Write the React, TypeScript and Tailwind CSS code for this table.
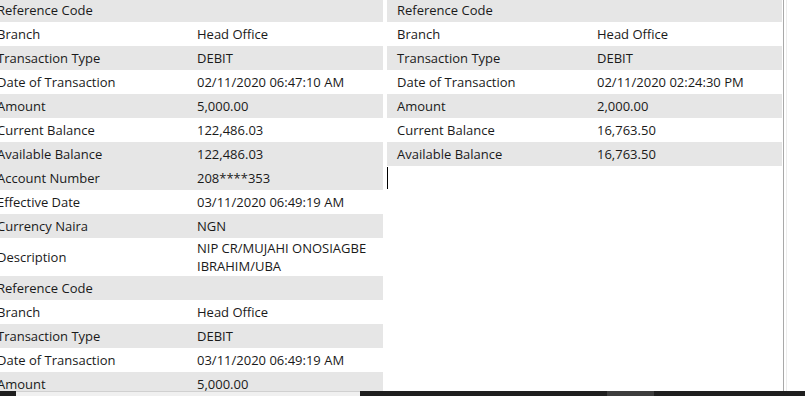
import React from "react";

type Row = { label: string; value: React.ReactNode; gray: boolean; tall?: boolean };

const leftRows: Row[] = [
  { label: "Reference Code", value: "", gray: true },
  { label: "Branch", value: "Head Office", gray: false },
  { label: "Transaction Type", value: "DEBIT", gray: true },
  { label: "Date of Transaction", value: "02/11/2020 06:47:10 AM", gray: false },
  { label: "Amount", value: "5,000.00", gray: true },
  { label: "Current Balance", value: "122,486.03", gray: false },
  { label: "Available Balance", value: "122,486.03", gray: true },
  { label: "Account Number", value: "208****353", gray: true },
  { label: "Effective Date", value: "03/11/2020 06:49:19 AM", gray: false },
  { label: "Currency Naira", value: "NGN", gray: true },
  {
    label: "Description",
    value: (
      <>
        NIP CR/MUJAHI ONOSIAGBE
        <br />
        IBRAHIM/UBA
      </>
    ),
    gray: false,
    tall: true,
  },
  { label: "Reference Code", value: "", gray: true },
  { label: "Branch", value: "Head Office", gray: false },
  { label: "Transaction Type", value: "DEBIT", gray: true },
  { label: "Date of Transaction", value: "03/11/2020 06:49:19 AM", gray: false },
  { label: "Amount", value: "5,000.00", gray: true },
];

const rightRows: Row[] = [
  { label: "Reference Code", value: "", gray: true },
  { label: "Branch", value: "Head Office", gray: false },
  { label: "Transaction Type", value: "DEBIT", gray: true },
  { label: "Date of Transaction", value: "02/11/2020 02:24:30 PM", gray: false },
  { label: "Amount", value: "2,000.00", gray: true },
  { label: "Current Balance", value: "16,763.50", gray: false },
  { label: "Available Balance", value: "16,763.50", gray: true },
];

function TableRow({ row }: { row: Row }) {
  return (
    <div
      className={
        "flex items-center leading-[18px] " +
        (row.tall ? "h-[38px] " : "h-[24px] ") +
        (row.gray ? "bg-[#e6e6e6]" : "bg-white")
      }
    >
      <div className="w-[200px] shrink-0 pl-[10px] whitespace-nowrap">{row.label}</div>
      <div className="flex-1 pl-[10px] whitespace-nowrap">{row.value}</div>
    </div>
  );
}

export default function App() {
  return (
    <div
      className="relative w-[805px] h-[396px] overflow-hidden bg-white text-[13px] text-[#1a1a1a]"
      style={{ fontFamily: '"Open Sans", "Liberation Sans", sans-serif' }}
    >
      <div className="flex items-start mt-[-2px]">
        <div className="ml-[-13px] w-[396px] shrink-0 flex flex-col">
          {leftRows.map((r, i) => (
            <TableRow key={i} row={r} />
          ))}
        </div>
        <div className="ml-[4px] w-[395px] shrink-0 flex flex-col">
          {rightRows.map((r, i) => (
            <TableRow key={i} row={r} />
          ))}
        </div>
        <div className="ml-[1px] w-[1px] h-[400px] bg-[#a9a9a9] shrink-0" />
        <div className="ml-[2px] w-[1px] h-[400px] bg-[#ececec] shrink-0" />
      </div>

      {/* text cursor */}
      <div className="absolute left-[387px] top-[167px] w-[1px] h-[22px] bg-black" />

      {/* bottom bar */}
      <div className="absolute left-0 bottom-0 w-full h-[5px] flex">
        <div className="w-[16px] bg-[#1f1f1f]" />
        <div className="w-[344px] bg-[#f0f0f0] border-t border-[#d0d0d0]" />
        <div className="w-[247px] bg-[#1f1f1f]" />
        <div className="w-[47px] bg-[#3d3d3d]" />
        <div className="flex-1 bg-[#1f1f1f]" />
      </div>
    </div>
  );
}
